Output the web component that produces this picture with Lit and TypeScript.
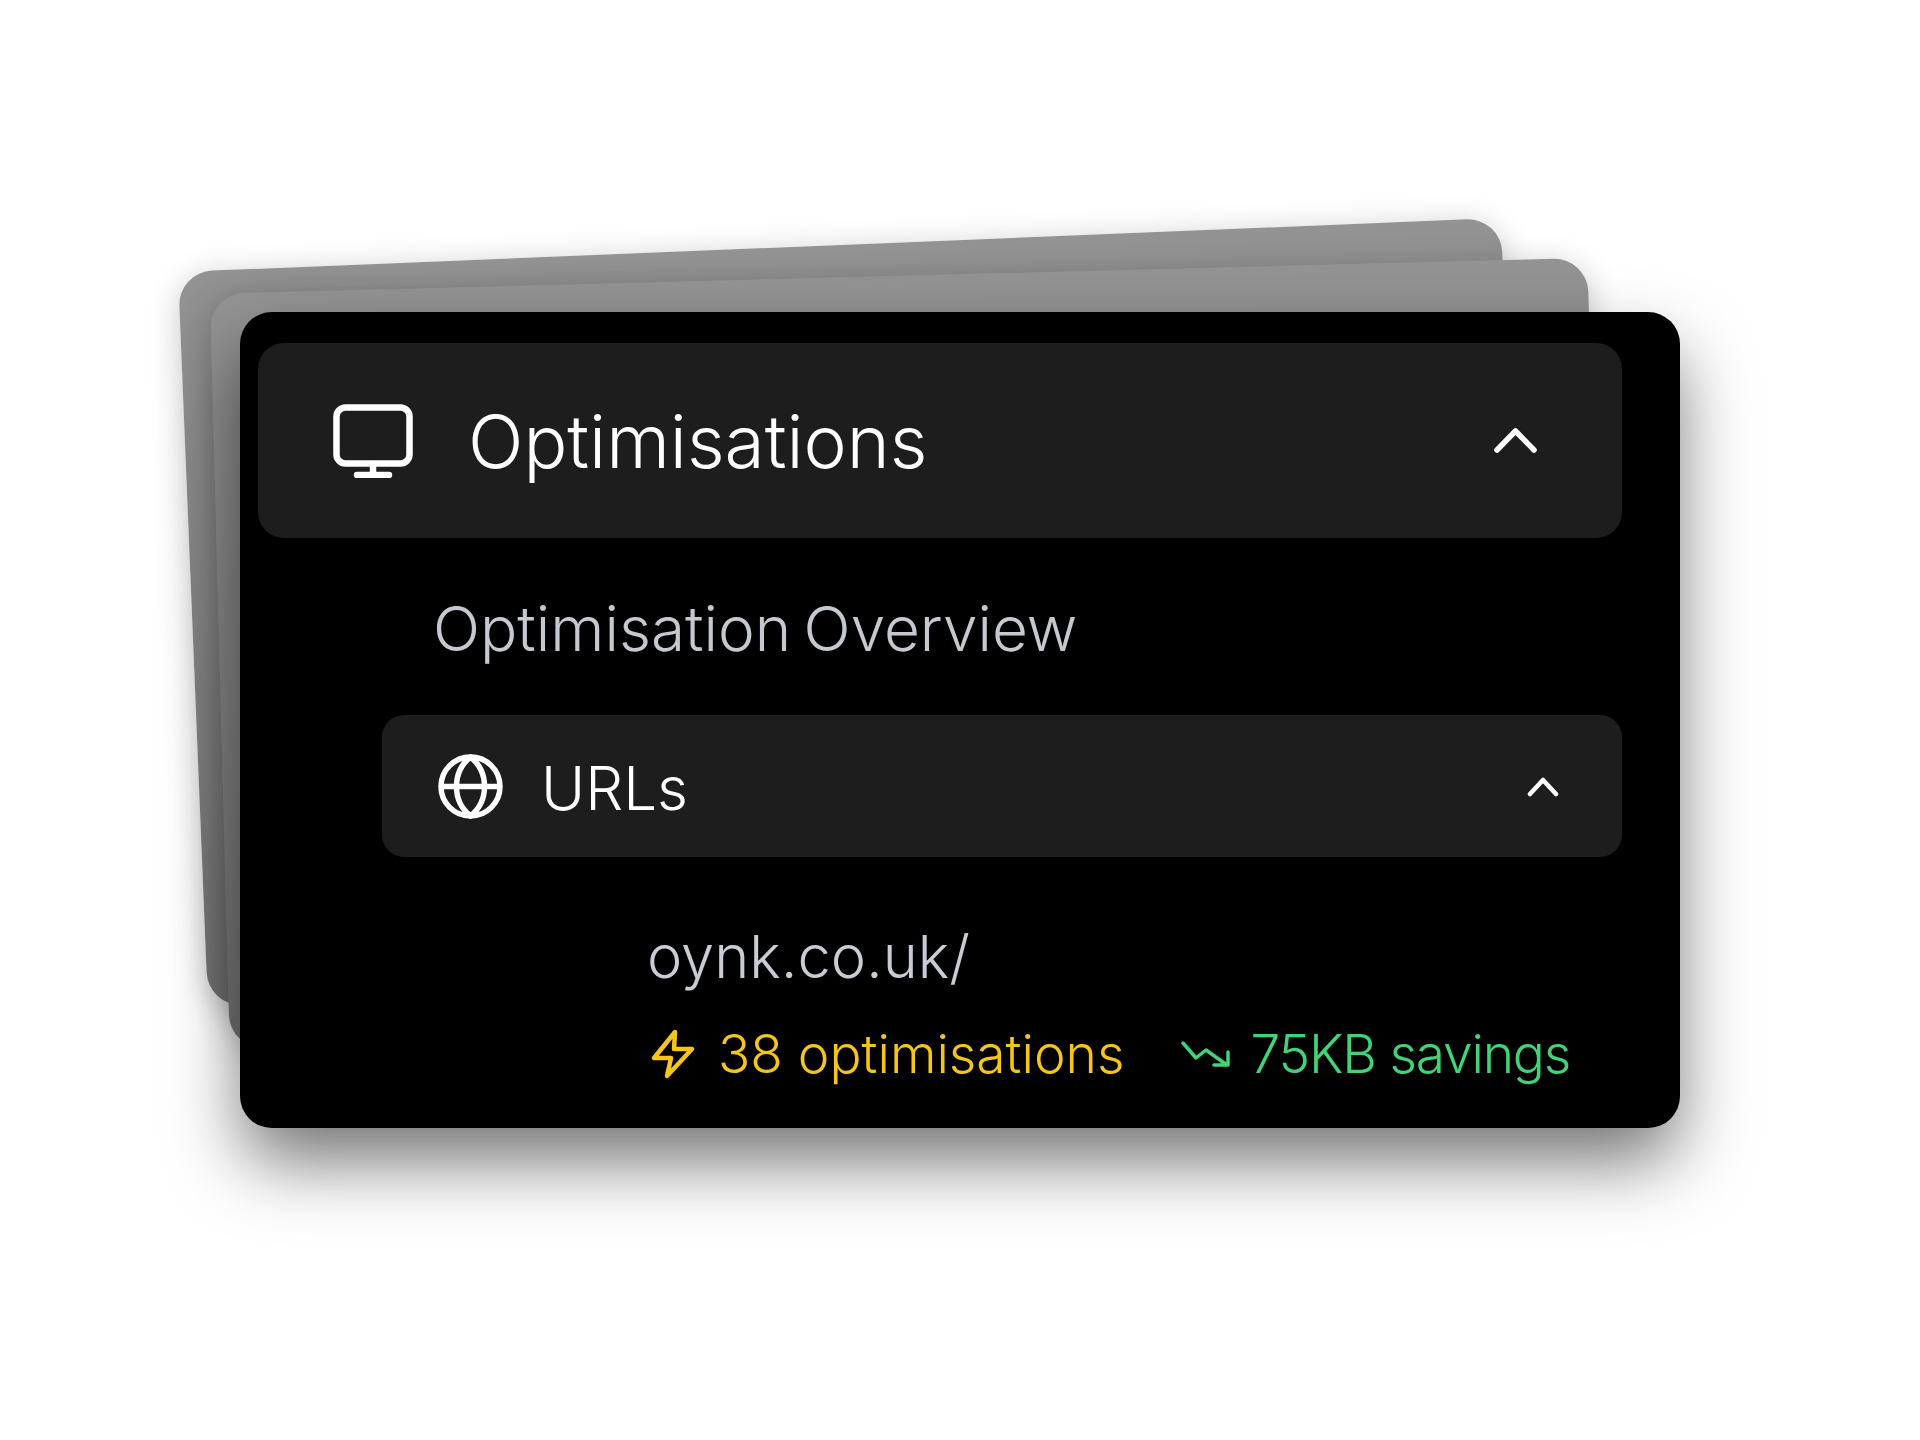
import { LitElement, html, css } from 'lit'
import { customElement } from 'lit/decorators.js'

@customElement('app-root')
export class AppRoot extends LitElement {
  static styles = css`
    :host {
      display: block;
      width: 1920px;
      height: 1440px;
      background: #fff;
      overflow: hidden;
      font-family: Inter, 'Noto Sans', sans-serif;
    }

    .stage {
      position: relative;
      width: 1440px;
      height: 816px;
      margin: 0 0 0 240px;
      top: 312px;
    }

    .sheet {
      position: absolute;
      background: linear-gradient(#939393, #747474);
      border-radius: 34px;
      transform-origin: top left;
      box-shadow: 0 6px 32px rgba(0, 0, 0, 0.22);
    }

    .sheet.back {
      left: -62px;
      top: -40px;
      width: 1324px;
      height: 735px;
      transform: rotate(-2.34deg);
    }

    .sheet.middle {
      left: -30px;
      top: -18px;
      width: 1378px;
      height: 755px;
      transform: rotate(-1.5deg);
    }

    .card {
      position: relative;
      box-sizing: border-box;
      width: 1440px;
      height: 816px;
      padding: 31px 58px 0 18px;
      background: #000;
      border-radius: 32px;
      box-shadow: 0 36px 72px -4px rgba(0, 0, 0, 0.56);
    }

    .content {
      filter: blur(0.7px);
    }

    .row {
      display: flex;
      align-items: center;
      background: #1d1d1d;
    }

    .row svg {
      display: block;
      flex: none;
      fill: none;
      stroke: #fff;
      stroke-linecap: round;
      stroke-linejoin: round;
    }

    .section {
      height: 195px;
      padding: 0 85px 0 75px;
      border-radius: 26px;
    }

    .section .title {
      margin-left: 55px;
      padding-top: 2px;
      font-size: 73px;
      font-weight: 300;
      color: #fff;
    }

    .chevron {
      margin-left: auto;
    }

    .overview {
      box-sizing: border-box;
      height: 177px;
      display: flex;
      align-items: center;
      padding: 4px 0 0 175px;
      font-size: 62px;
      font-weight: 300;
      word-spacing: -5px;
      color: #c6c8d0;
    }

    .urls {
      height: 142px;
      margin-left: 124px;
      padding: 0 63px 0 56px;
      border-radius: 22px;
    }

    .urls .title {
      margin-left: 38px;
      padding-top: 3px;
      font-size: 60px;
      font-weight: 300;
      color: #fff;
    }

    .detail {
      margin-left: 389px;
      padding-top: 64px;
    }

    .path {
      font-size: 59.5px;
      font-weight: 300;
      line-height: 70px;
      color: #c9ccd4;
    }

    .stats {
      display: flex;
      align-items: center;
      margin-top: 33px;
      font-size: 53.3px;
      font-weight: 300;
      line-height: 60px;
    }

    .stat {
      display: flex;
      align-items: center;
    }

    .stat svg {
      display: block;
      flex: none;
      fill: none;
      stroke: currentColor;
      stroke-linecap: round;
      stroke-linejoin: round;
    }

    .stat.yellow {
      color: #f5c518;
    }

    .stat.yellow svg {
      margin: 0 22px 0 3px;
    }

    .stat.green {
      margin-left: 57px;
      color: #3fd478;
      letter-spacing: -1.2px;
    }

    .stat.green svg {
      margin-right: 19px;
    }
  `

  render() {
    return html`
      <div class="stage">
        <div class="sheet back"></div>
        <div class="sheet middle"></div>
        <div class="card">
          <div class="content">
            <div class="row section">
              <svg width="80" height="74" viewBox="0 0 80 74" stroke-width="6.5">
                <rect x="3.5" y="3.5" width="73" height="56" rx="9" />
                <path d="M40 60v11M24 71h32" />
              </svg>
              <span class="title">Optimisations</span>
              <svg class="chevron" width="43" height="25" viewBox="0 0 43 25" stroke-width="5.5">
                <path d="M3 22 21.5 3 40 22" />
              </svg>
            </div>
            <div class="overview">Optimisation Overview</div>
            <div class="row urls">
              <svg width="65" height="65" viewBox="0 0 65 65" stroke-width="5.5">
                <circle cx="32.5" cy="32.5" r="29.5" />
                <path d="M4 32.5h57M32.5 3c-10 8-14 18-14 29.5S22.5 54 32.5 62c10-8 14-18 14-29.5S42.5 11 32.5 3z" />
              </svg>
              <span class="title">URLs</span>
              <svg class="chevron" width="32" height="23" viewBox="0 0 32 23" stroke-width="4.5">
                <path d="M3 19 16 5l13 14" />
              </svg>
            </div>
            <div class="detail">
              <div class="path">oynk.co.uk/</div>
              <div class="stats">
                <div class="stat yellow">
                  <svg width="46" height="50" viewBox="0 0 46 50" stroke-width="4.5">
                    <path d="M25 3 4 29h17l-4 18 25-27H24z" />
                  </svg>
                  <span>38 optimisations</span>
                </div>
                <div class="stat green">
                  <svg width="50" height="28" viewBox="0 0 50 28" stroke-width="3.5">
                    <path d="M2 3 15 18l10-8 21 15M47 12v13H33" />
                  </svg>
                  <span>75KB savings</span>
                </div>
              </div>
            </div>
          </div>
        </div>
      </div>
    `
  }
}

declare global {
  interface HTMLElementTagNameMap {
    'app-root': AppRoot
  }
}
